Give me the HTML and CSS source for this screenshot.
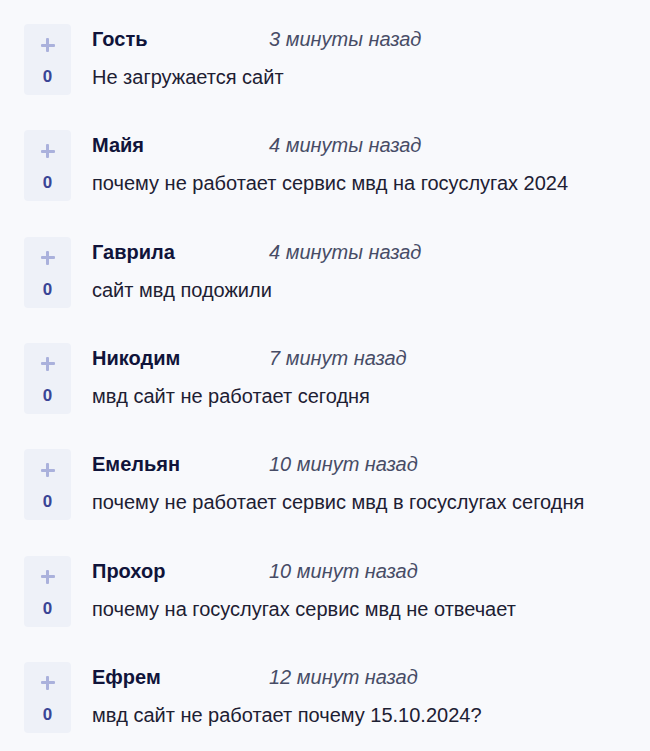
FILE: index.html
```html
<!DOCTYPE html>
<html lang="ru">
<head>
<meta charset="utf-8">
<link rel="stylesheet" href="styles.css">
</head>
<body>
<ul class="list">
  <li class="item">
    <div class="vote"><span class="plus"></span><span class="count">0</span></div>
    <div class="body">
      <div class="head"><span class="name">Гость</span><span class="time">3 минуты назад</span></div>
      <div class="text">Не загружается сайт</div>
    </div>
  </li>
  <li class="item">
    <div class="vote"><span class="plus"></span><span class="count">0</span></div>
    <div class="body">
      <div class="head"><span class="name">Майя</span><span class="time">4 минуты назад</span></div>
      <div class="text">почему не работает сервис мвд на госуслугах 2024</div>
    </div>
  </li>
  <li class="item">
    <div class="vote"><span class="plus"></span><span class="count">0</span></div>
    <div class="body">
      <div class="head"><span class="name">Гаврила</span><span class="time">4 минуты назад</span></div>
      <div class="text">сайт мвд подожили</div>
    </div>
  </li>
  <li class="item">
    <div class="vote"><span class="plus"></span><span class="count">0</span></div>
    <div class="body">
      <div class="head"><span class="name">Никодим</span><span class="time">7 минут назад</span></div>
      <div class="text">мвд сайт не работает сегодня</div>
    </div>
  </li>
  <li class="item">
    <div class="vote"><span class="plus"></span><span class="count">0</span></div>
    <div class="body">
      <div class="head"><span class="name">Емельян</span><span class="time">10 минут назад</span></div>
      <div class="text">почему не работает сервис мвд в госуслугах сегодня</div>
    </div>
  </li>
  <li class="item">
    <div class="vote"><span class="plus"></span><span class="count">0</span></div>
    <div class="body">
      <div class="head"><span class="name">Прохор</span><span class="time">10 минут назад</span></div>
      <div class="text">почему на госуслугах сервис мвд не отвечает</div>
    </div>
  </li>
  <li class="item">
    <div class="vote"><span class="plus"></span><span class="count">0</span></div>
    <div class="body">
      <div class="head"><span class="name">Ефрем</span><span class="time">12 минут назад</span></div>
      <div class="text">мвд сайт не работает почему 15.10.2024?</div>
    </div>
  </li>
</ul>
</body>
</html>
```
FILE: styles.css
```css
html, body {
  margin: 0;
  padding: 0;
  background: #f8f9fc;
  font-family: "Liberation Sans", Arial, sans-serif;
}
.list {
  list-style: none;
  margin: 0;
  padding: 24px 0 0 24px;
  display: flex;
  flex-direction: column;
  gap: 35.33px;
}
.item {
  display: flex;
  gap: 21px;
  height: 71px;
}
.vote {
  width: 47px;
  height: 71px;
  background: #eef1f8;
  border-radius: 4px;
  display: flex;
  flex-direction: column;
  align-items: center;
  padding-top: 14px;
  box-sizing: border-box;
}
.plus {
  position: relative;
  width: 14px;
  height: 14px;
  display: block;
}
.plus::before, .plus::after {
  content: "";
  position: absolute;
  background: #aab1dc;
  border-radius: 1px;
}
.plus::before { left: 0; top: 5.5px; width: 14px; height: 3px; }
.plus::after { left: 5.5px; top: 0; width: 3px; height: 14px; }
.count {
  margin-top: 15px;
  font-weight: bold;
  font-size: 17px;
  color: #3a4596;
}
.body {
  display: flex;
  flex-direction: column;
  padding-top: 4px;
}
.head {
  display: flex;
  align-items: baseline;
  height: 26px;
}
.name {
  width: 177px;
  font-weight: bold;
  font-size: 20px;
  color: #10143a;
}
.time {
  font-style: italic;
  font-size: 20px;
  color: #474c66;
}
.text {
  margin-top: 12px;
  font-size: 20px;
  color: #1d2033;
}
```
